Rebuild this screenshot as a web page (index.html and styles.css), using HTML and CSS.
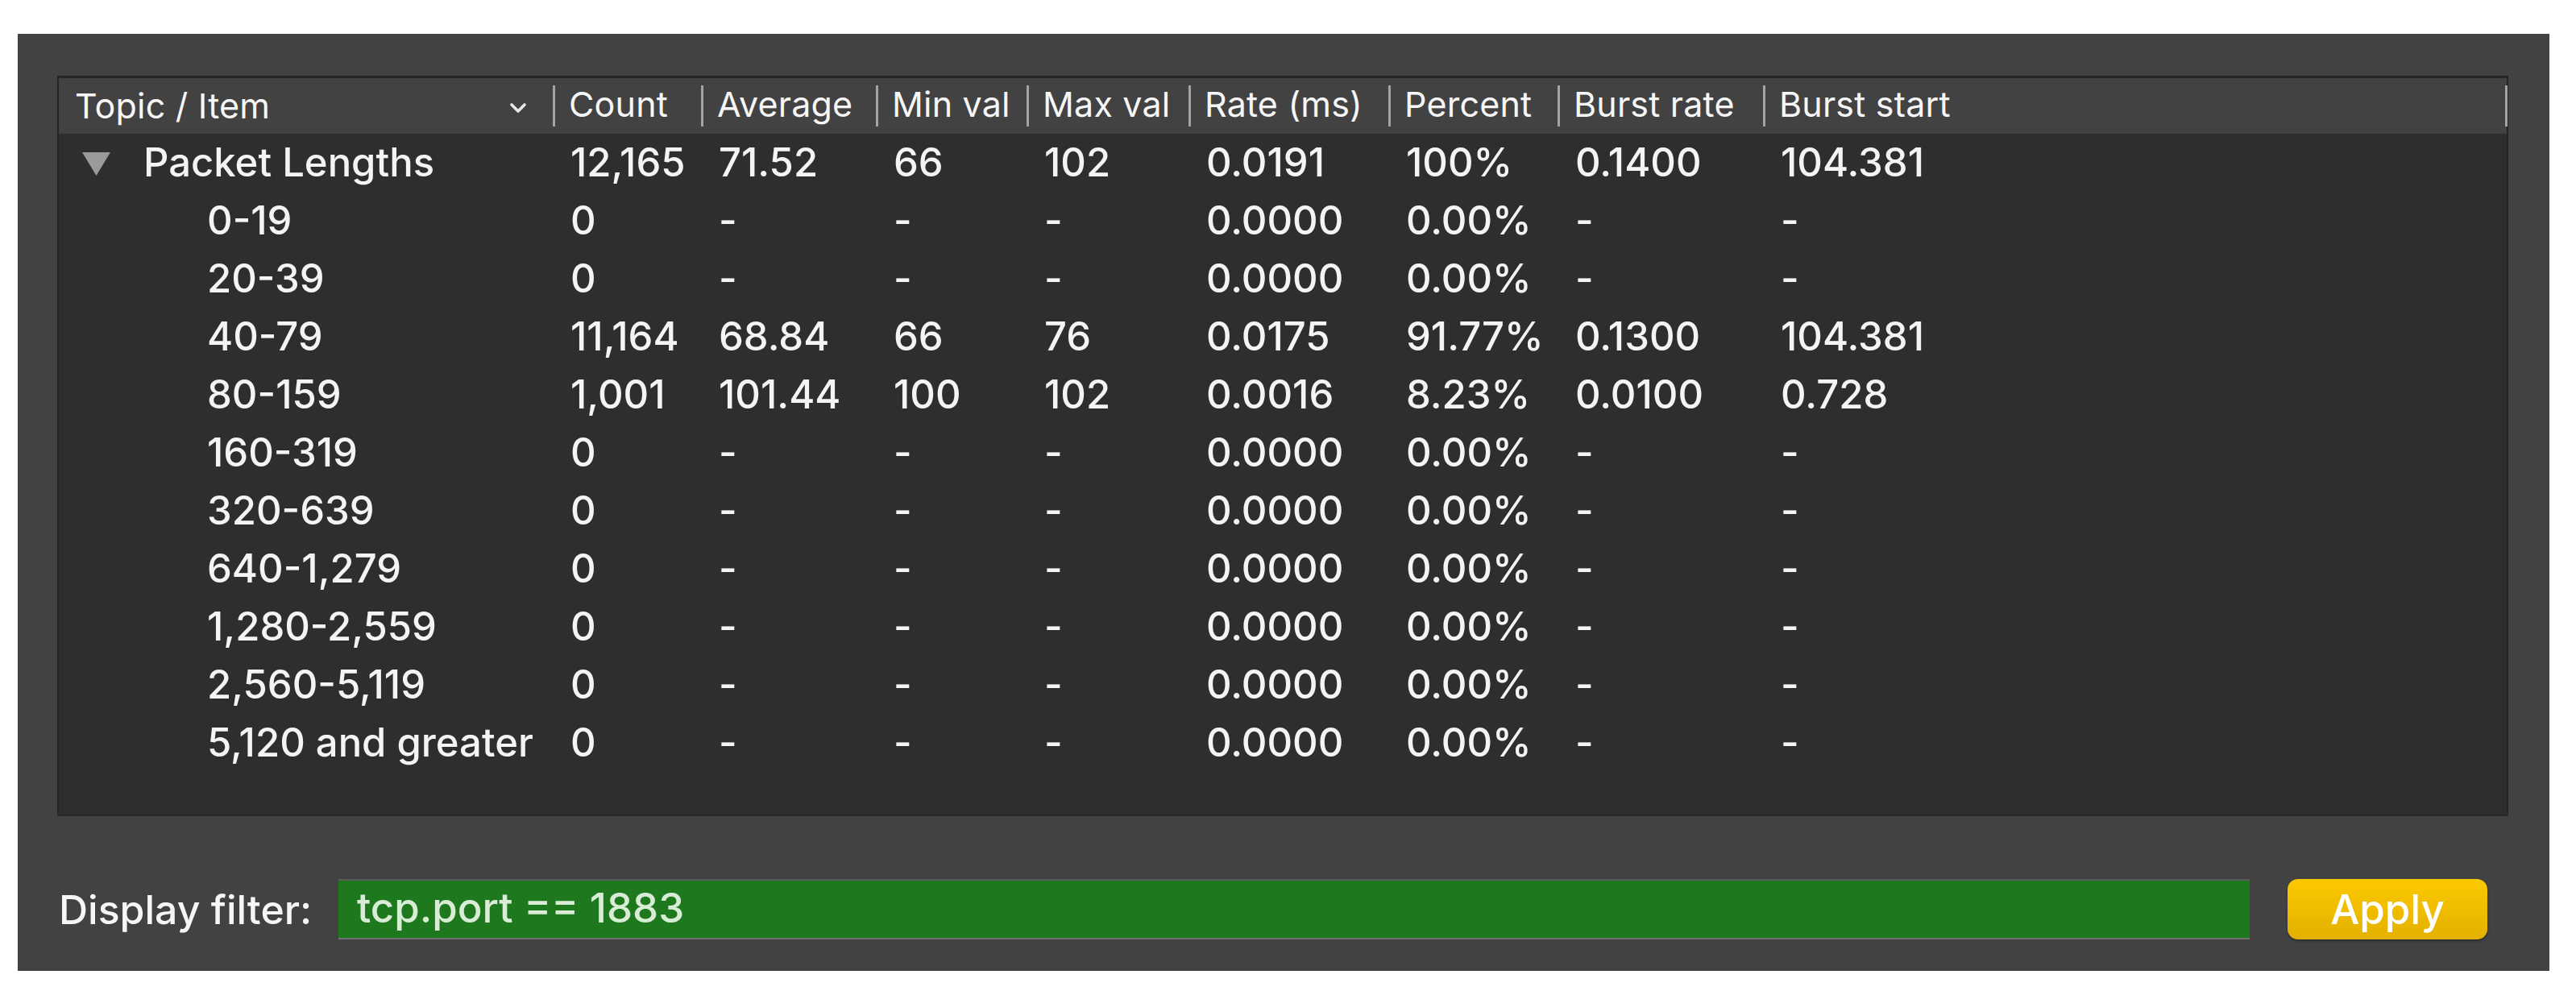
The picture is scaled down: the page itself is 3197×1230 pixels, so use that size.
FILE: index.html
```html
<!DOCTYPE html>
<html lang="en">
<head>
<meta charset="utf-8">
<title>Packet Lengths</title>
<link rel="stylesheet" href="styles.css">
</head>
<body>
<div class="panel">
  <div class="table">
    <div class="hrow">
      <div class="hcell first"><span>Topic / Item</span>
        <svg class="chev" width="22" height="14" viewBox="0 0 22 14"><path d="M3 3 L11 11 L19 3" fill="none" stroke="#e8e8e8" stroke-width="3.6" stroke-linecap="round" stroke-linejoin="round"/></svg>
      </div>
      <div class="hcell">Count</div>
      <div class="hcell">Average</div>
      <div class="hcell">Min val</div>
      <div class="hcell">Max val</div>
      <div class="hcell">Rate (ms)</div>
      <div class="hcell">Percent</div>
      <div class="hcell">Burst rate</div>
      <div class="hcell">Burst start</div>
      <div class="hcell"></div>
    </div>
    <div class="body">
      <div class="row">
        <div class="cell topic parent"><svg class="tri" width="35" height="29" viewBox="0 0 35 29"><path d="M0 0 H35 L17.5 29 Z" fill="#9a9a9a"/></svg><span>Packet Lengths</span></div>
        <div class="cell">12,165</div><div class="cell">71.52</div><div class="cell">66</div><div class="cell">102</div><div class="cell">0.0191</div><div class="cell">100%</div><div class="cell">0.1400</div><div class="cell">104.381</div>
      </div>
      <div class="row">
        <div class="cell topic child">0-19</div>
        <div class="cell">0</div><div class="cell">-</div><div class="cell">-</div><div class="cell">-</div><div class="cell">0.0000</div><div class="cell">0.00%</div><div class="cell">-</div><div class="cell">-</div>
      </div>
      <div class="row">
        <div class="cell topic child">20-39</div>
        <div class="cell">0</div><div class="cell">-</div><div class="cell">-</div><div class="cell">-</div><div class="cell">0.0000</div><div class="cell">0.00%</div><div class="cell">-</div><div class="cell">-</div>
      </div>
      <div class="row">
        <div class="cell topic child">40-79</div>
        <div class="cell">11,164</div><div class="cell">68.84</div><div class="cell">66</div><div class="cell">76</div><div class="cell">0.0175</div><div class="cell">91.77%</div><div class="cell">0.1300</div><div class="cell">104.381</div>
      </div>
      <div class="row">
        <div class="cell topic child">80-159</div>
        <div class="cell">1,001</div><div class="cell">101.44</div><div class="cell">100</div><div class="cell">102</div><div class="cell">0.0016</div><div class="cell">8.23%</div><div class="cell">0.0100</div><div class="cell">0.728</div>
      </div>
      <div class="row">
        <div class="cell topic child">160-319</div>
        <div class="cell">0</div><div class="cell">-</div><div class="cell">-</div><div class="cell">-</div><div class="cell">0.0000</div><div class="cell">0.00%</div><div class="cell">-</div><div class="cell">-</div>
      </div>
      <div class="row">
        <div class="cell topic child">320-639</div>
        <div class="cell">0</div><div class="cell">-</div><div class="cell">-</div><div class="cell">-</div><div class="cell">0.0000</div><div class="cell">0.00%</div><div class="cell">-</div><div class="cell">-</div>
      </div>
      <div class="row">
        <div class="cell topic child">640-1,279</div>
        <div class="cell">0</div><div class="cell">-</div><div class="cell">-</div><div class="cell">-</div><div class="cell">0.0000</div><div class="cell">0.00%</div><div class="cell">-</div><div class="cell">-</div>
      </div>
      <div class="row">
        <div class="cell topic child">1,280-2,559</div>
        <div class="cell">0</div><div class="cell">-</div><div class="cell">-</div><div class="cell">-</div><div class="cell">0.0000</div><div class="cell">0.00%</div><div class="cell">-</div><div class="cell">-</div>
      </div>
      <div class="row">
        <div class="cell topic child">2,560-5,119</div>
        <div class="cell">0</div><div class="cell">-</div><div class="cell">-</div><div class="cell">-</div><div class="cell">0.0000</div><div class="cell">0.00%</div><div class="cell">-</div><div class="cell">-</div>
      </div>
      <div class="row">
        <div class="cell topic child">5,120 and greater</div>
        <div class="cell">0</div><div class="cell">-</div><div class="cell">-</div><div class="cell">-</div><div class="cell">0.0000</div><div class="cell">0.00%</div><div class="cell">-</div><div class="cell">-</div>
      </div>
    </div>
  </div>
  <div class="filter">
    <label class="flabel" for="f">Display filter:</label>
    <div class="finput" id="f">tcp.port == 1883</div>
    <button class="apply" type="button">Apply</button>
  </div>
</div>
</body>
</html>
```
FILE: styles.css
```css
html, body {
  margin: 0;
  padding: 0;
  background: #ffffff;
}
body {
  font-family: Inter, "Liberation Sans", Arial, sans-serif;
  font-weight: 500;
  color: #f4f4f4;
}
.panel {
  margin: 42px 0 0 22px;
  width: 3142px;
  height: 1163px;
  box-sizing: border-box;
  background: #424242;
  padding: 52px 51px 39px 49px;
  display: flex;
  flex-direction: column;
}
.table {
  height: 919px;
  box-sizing: border-box;
  border: 2px solid #262626;
  border-top-width: 3px;
  background: #2e2e2e;
  display: flex;
  flex-direction: column;
}
.hrow, .row {
  display: grid;
  grid-template-columns: 613px 184px 217px 187px 201px 248px 210px 255px 921px 1fr;
}
.hrow {
  height: 69px;
  background: #424242;
  align-items: center;
}
.hcell {
  height: 51px;
  line-height: 47px;
  font-size: 43px;
  font-weight: 400;
  border-left: 3px solid #a4a4a4;
  padding-left: 17px;
  white-space: nowrap;
  color: #f6f6f6;
  letter-spacing: 0.2px;
}
.hcell.first {
  border-left: none;
  padding-left: 20px;
  padding-right: 32px;
  display: flex;
  justify-content: space-between;
  align-items: center;
}
.chev {
  display: block;
  margin-top: 4px;
}
.row {
  height: 72px;
}
.cell {
  font-size: 49px;
  line-height: 72px;
  padding-left: 22px;
  white-space: nowrap;
}
.topic.parent {
  padding-left: 29px;
  display: flex;
  align-items: center;
  gap: 41px;
}
.tri {
  display: block;
  margin-top: 2px;
}
.topic.child {
  padding-left: 184px;
}
.filter {
  margin-top: 78px;
  height: 75px;
  display: flex;
  align-items: center;
}
.flabel {
  flex: none;
  width: 347px;
  padding-left: 2px;
  font-size: 50px;
  color: #f6f6f6;
}
.finput {
  flex: 1;
  height: 75px;
  box-sizing: border-box;
  background: #1e781e;
  border-top: 2px solid #5c5c5c;
  border-bottom: 2px solid #727272;
  padding-left: 23px;
  font-size: 51px;
  line-height: 68px;
  color: #d9edd6;
}
.apply {
  flex: none;
  width: 248px;
  height: 75px;
  margin-left: 47px;
  margin-right: 26px;
  border: none;
  border-radius: 13px;
  background: linear-gradient(#fcc900, #e3b000);
  box-shadow: 0 2px 3px rgba(0,0,0,0.35);
  font-family: Inter, "Liberation Sans", Arial, sans-serif;
  font-weight: 500;
  font-size: 51px;
  line-height: 71px;
  color: #ffffff;
  padding: 0;
}
```
